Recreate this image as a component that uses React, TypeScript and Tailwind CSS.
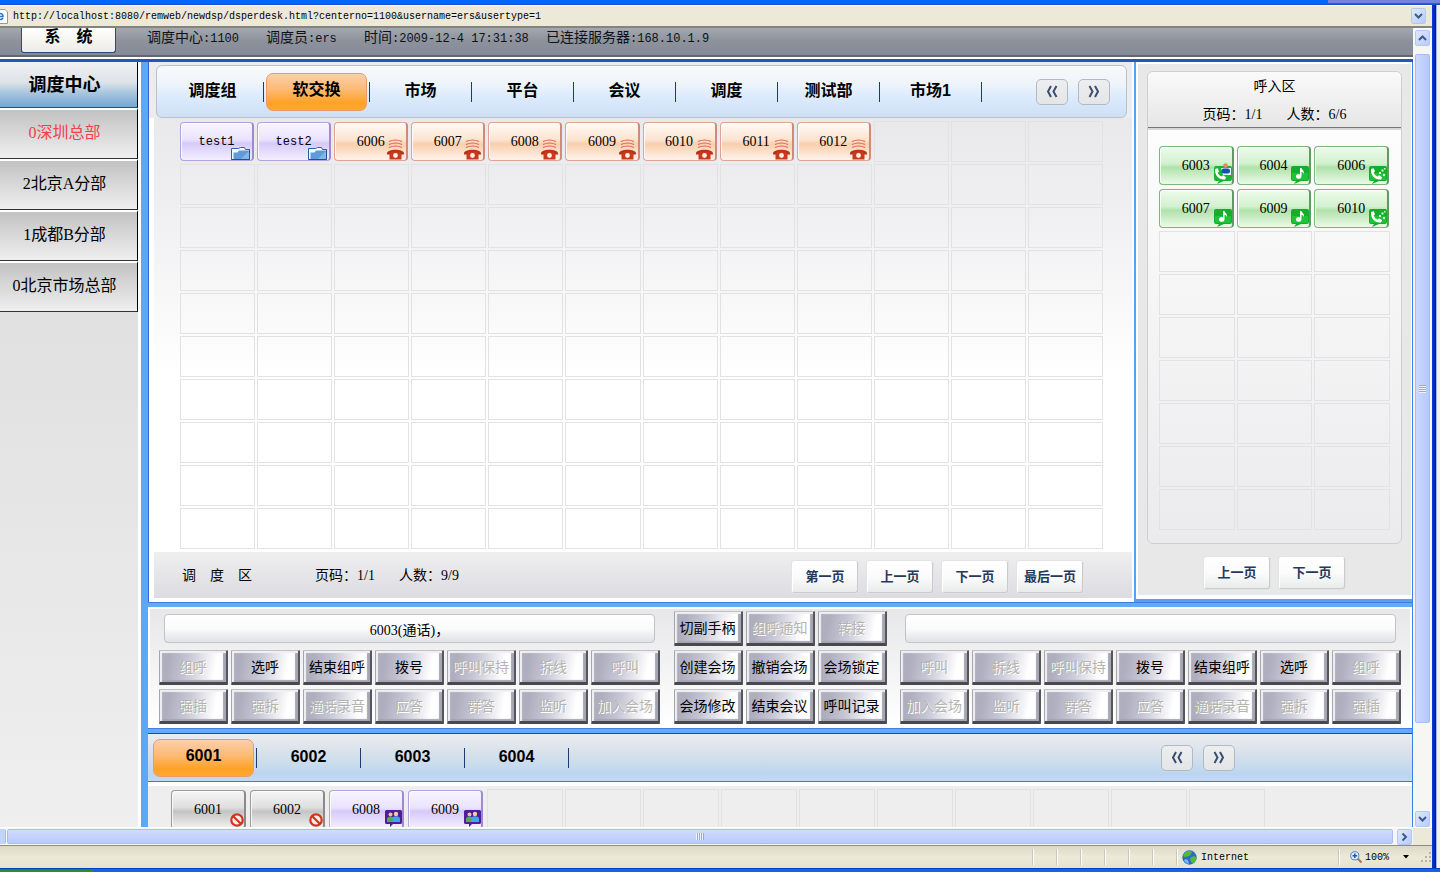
import type { ReactNode } from 'react';
import clsx from 'clsx';

type Tone = 'violet' | 'orange' | 'green' | 'gray';
type IconName = 'folder' | 'phone' | 'note' | 'call' | 'callUser' | 'ban' | 'group';

type Station = { label: string; tone: Tone; icon: IconName };

const centers = ['0深圳总部', '2北京A分部', '1成都B分部', '0北京市场总部'];

const groupTabs = ['调度组', '软交换', '市场', '平台', '会议', '调度', '测试部', '市场1'];

const stations: Station[] = [
  { label: 'test1', tone: 'violet', icon: 'folder' },
  { label: 'test2', tone: 'violet', icon: 'folder' },
  ...['6006', '6007', '6008', '6009', '6010', '6011', '6012'].map(
    (label): Station => ({ label, tone: 'orange', icon: 'phone' })
  )
];

const incoming: Station[] = [
  { label: '6003', tone: 'green', icon: 'callUser' },
  { label: '6004', tone: 'green', icon: 'note' },
  { label: '6006', tone: 'green', icon: 'call' },
  { label: '6007', tone: 'green', icon: 'note' },
  { label: '6009', tone: 'green', icon: 'note' },
  { label: '6010', tone: 'green', icon: 'call' }
];

const members: Station[] = [
  { label: '6001', tone: 'gray', icon: 'ban' },
  { label: '6002', tone: 'gray', icon: 'ban' },
  { label: '6008', tone: 'violet', icon: 'group' },
  { label: '6009', tone: 'violet', icon: 'group' }
];

const enabledActions = ['选呼', '结束组呼', '拨号', '切副手柄', '创建会场', '撤销会场', '会场锁定', '会场修改', '结束会议', '呼叫记录'];

const leftActions = ['组呼', '选呼', '结束组呼', '拨号', '呼叫保持', '拆线', '呼叫', '强插', '强拆', '通话录音', '应答', '群答', '监听', '加入会场'];
const centerActions = ['切副手柄', '组呼通知', '转接', '创建会场', '撤销会场', '会场锁定', '会场修改', '结束会议', '呼叫记录'];
const rightActions = ['呼叫', '拆线', '呼叫保持', '拨号', '结束组呼', '选呼', '组呼', '加入会场', '监听', '群答', '应答', '通话录音', '强拆', '强插'];

const tones: Record<Tone, string> = {
  violet: 'border-[#b3a3dc] border-r-[#9d8ad0] bg-[linear-gradient(#f8f5ff_0%,#eae3ff_45%,#d6cafa_55%,#f3efff_100%)]',
  orange: 'border-[#dfa594] border-r-[#cf8a78] bg-[linear-gradient(#fffaf6_0%,#fde4d0_45%,#f8cfae_57%,#fff3ea_100%)]',
  green: 'border-[#7fb480] border-r-[#5f9a62] bg-[linear-gradient(#eefbec_0%,#d2f1cd_45%,#b0e2aa_55%,#ebfae8_100%)]',
  gray: 'border-[#9a9a9a] border-r-[#8a8a8a] bg-[linear-gradient(#f6f6f6_0%,#dedede_45%,#c4c4c4_55%,#f0f0f0_100%)]'
};

const mono = 'font-["Liberation_Mono","Noto_Sans_CJK_SC",monospace]';
const serif = 'font-["Liberation_Serif","Noto_Sans_CJK_SC",serif]';

function Bubble({ children }: { children?: ReactNode }) {
  return (
    <svg width="18" height="19" viewBox="0 0 18 19" aria-hidden="true">
      <path d="M2 1h14a2 2 0 0 1 2 2v11a2 2 0 0 1-2 2H10l-7 3 2-3H2a2 2 0 0 1-2-2V3a2 2 0 0 1 2-2z" fill="#17ad2c" />
      <path d="M1 8h16v6a1 1 0 0 1-1 1H2a1 1 0 0 1-1-1z" fill="#1fc337" />
      {children}
    </svg>
  );
}

function Handset() {
  return <path d="M2 4 4.800 3.200l1.200 3.200-1.300 1.200c.6 1.900 1.900 3.200 3.900 3.900l1.500-1.300 3 2-1 2.200C6.500 15.400 1.500 10.500 2 4z" fill="#fff" />;
}

function StationIcon({ name }: { name: IconName }) {
  switch (name) {
    case 'folder':
      return (
        <svg width="19" height="13" viewBox="0 0 19 13" aria-hidden="true">
          <path d="M.5 12.500V1.500h7l2-1h4l1 2h4v10z" fill="#f2f9ff" stroke="#2c62ad" />
          <path d="M2.500 12V5.500h4l1.500-2h10V12z" fill="#5e9bd8" />
          <path d="M10 12l8-8v8z" fill="#83b7e8" />
          <path d="M.5 12.500h18v-10" fill="none" stroke="#1f4f98" />
        </svg>
      );
    case 'phone':
      return (
        <svg width="17" height="21" viewBox="0 0 17 21" aria-hidden="true">
          <g fill="none" stroke="#dd6450" strokeWidth="1.200">
            <path d="M2 2.500q6.500-3 13 0M2 5.500q6.500-3 13 0M2 8.500q6.500-3 13 0" />
          </g>
          <path d="M0 14.500c0-5 17-5 17 0v1h-4.500v-2.200h-8v2.200H0z" fill="#bd2f17" />
          <path d="M4.500 12.500h8l2 3v5h-12v-5z" fill="#c63a1d" />
          <circle cx="8.500" cy="16.500" r="2.400" fill="#fff0e6" />
        </svg>
      );
    case 'note':
      return (
        <Bubble>
          <path d="M9 3h1.500c.3 2 3 2.300 2.500 6-.5-1.300-1.300-1.800-2.500-2v4.500A2.800 2.300 0 1 1 9 9.500z" fill="#fff" />
        </Bubble>
      );
    case 'call':
      return (
        <Bubble>
          <Handset />
          <path d="M10 7h2v2h-2zM12.500 4.500h2v2h-2zM14 9h2v2h-2zM15 3h1.500v1.500H15z" fill="#d9ffdc" />
        </Bubble>
      );
    case 'callUser':
      return (
        <svg width="18" height="21" viewBox="0 0 18 21" aria-hidden="true">
          <path d="M2 3h14a2 2 0 0 1 2 2v11a2 2 0 0 1-2 2h-6l-7 3 2-3H2a2 2 0 0 1-2-2V5a2 2 0 0 1 2-2z" fill="#1ab530" />
          <g transform="translate(-1 2)">
            <Handset />
          </g>
          <path d="M7 5h10v7H9z" fill="#e6f3ff" />
          <circle cx="11.500" cy="2.500" r="2.300" fill="#e98a5a" />
          <rect x="7.500" y="5.500" width="8.500" height="5" rx="2.500" fill="#174fae" />
        </svg>
      );
    case 'ban':
      return (
        <svg width="14" height="14" viewBox="0 0 14 14" aria-hidden="true">
          <circle cx="7" cy="7" r="5.700" fill="#f7ece6" stroke="#d3321c" strokeWidth="2.200" />
          <path d="M3 3l8 8" stroke="#d3321c" strokeWidth="2.200" />
        </svg>
      );
    case 'group':
      return (
        <svg width="17" height="17" viewBox="0 0 17 17" aria-hidden="true">
          <path d="M1.500 0h14A1.500 1.500 0 0 1 17 1.500v11a1.500 1.500 0 0 1-1.500 1.500H8l-3 3v-3H1.500A1.500 1.500 0 0 1 0 12.500v-11A1.500 1.500 0 0 1 1.500 0z" fill="#4f1c9a" />
          <circle cx="5.500" cy="4.500" r="2" fill="#f1c08f" />
          <circle cx="11" cy="4" r="2.200" fill="#f3cda2" />
          <path d="M2 12V9q0-2.500 3.500-2.500T9 9v3z" fill="#4fae53" />
          <path d="M7.500 12V8.500q0-2.300 3.500-2.300t4 2.300V12z" fill="#41a5ea" />
        </svg>
      );
  }
}

function StationButton({ label, tone, icon }: Station) {
  return (
    <button
      type="button"
      className={clsx(
        'relative h-[39px] w-full rounded-[4px] border border-r-2 text-center text-black shadow-[inset_1px_1px_0_#ffffffcc]',
        label.startsWith('t') ? `text-xs ${mono}` : `text-sm ${serif}`,
        tones[tone]
      )}
    >
      {label}
      <span
        className={clsx('absolute', {
          'right-0.5 bottom-0': icon === 'folder' || icon === 'phone',
          'right-0 bottom-0': icon === 'note' || icon === 'call' || icon === 'callUser',
          'right-0 bottom-px': icon === 'ban' || icon === 'group'
        })}
      >
        <span className="block [&>svg]:block">
          <StationIcon name={icon} />
        </span>
      </span>
    </button>
  );
}

function StationGrid({ items, total, className }: { items: Station[]; total: number; className: string }) {
  return (
    <div className={clsx('grid auto-rows-[41px] gap-0.5', className)}>
      {Array.from({ length: total }, (_, i) =>
        items[i] ? (
          <div key={i} className="py-px pr-px">
            <StationButton {...items[i]} />
          </div>
        ) : (
          <div key={i} className="border border-[#e2e2e4]" />
        )
      )}
    </div>
  );
}

function PageButton({ children }: { children: ReactNode }) {
  return (
    <button
      type="button"
      className="h-8 w-[66px] rounded-[3px] border border-[#c9cbcd] border-t-white border-l-white bg-linear-to-b from-white via-[#fbfbfb] to-[#e9ebeb] text-[13px] font-bold whitespace-nowrap text-[#26395a] shadow-[0_0_0_1px_#e3e3e5]"
    >
      {children}
    </button>
  );
}

function NavButtons() {
  return (
    <div className="flex gap-2.5">
      {['上一组', '下一组'].map((name, i) => (
        <button
          key={name}
          type="button"
          aria-label={name}
          className="flex h-[26px] w-8 items-center justify-center rounded-[5px] border border-[#b4b9bf] bg-linear-to-b from-[#eceef0] to-[#e4e5e6]"
        >
          <svg width="12" height="13" viewBox="0 0 12 13" className={i === 1 ? 'rotate-180' : undefined} aria-hidden="true">
            <path d="M5 1 2 6.500 5 12M10.500 1l-3 5.500 3 5.500" fill="none" stroke="#3b4d70" strokeWidth="2" />
          </svg>
        </button>
      ))}
    </div>
  );
}

function TabButton({ label, active, width }: { label: string; active: boolean; width: string }) {
  return (
    <div className={clsx('flex items-center', active ? 'pl-0.5' : width)}>
      <button
        type="button"
        className={clsx(
          'h-[38px] text-base font-bold text-black',
          active
            ? 'mr-0.5 w-[101px] rounded-[7px] border border-[#eb9a6c] bg-[linear-gradient(#fbcfae_0%,#fdb970_45%,#ffa226_80%,#ffa930_100%)] pb-1'
            : 'flex-1 pb-0.5'
        )}
      >
        {label}
      </button>
      <span className="h-5 w-px bg-[#1b3c6e]" />
    </div>
  );
}

function ActionButton({ label }: { label: string }) {
  const disabled = !enabledActions.includes(label);
  return (
    <button
      type="button"
      disabled={disabled}
      className={clsx(
        'h-[35px] w-[69px] rounded-[1px] border-t border-r-2 border-b-3 border-l border-t-[#c2c2c6] border-r-[#55555c] border-b-[#48484e] border-l-[#a5a5ab] bg-[linear-gradient(100deg,#aeaebf_15%,#c6c6d5_42%,#ffffff_82%)] text-sm whitespace-nowrap shadow-[inset_2px_2px_1px_#f0f0f4,inset_-3px_-2px_1px_#a6a6b2]',
        disabled ? 'text-[#b5b4ae] [text-shadow:1px_1px_0_#ffffff]' : 'text-black'
      )}
    >
      <span className="-mx-2">{label}</span>
    </button>
  );
}

function CallPanel({ name, value, actions }: { name: string; value: string; actions: string[] }) {
  return (
    <div>
      <div className="px-[5px] pt-[3px]">
        <input
          readOnly
          aria-label={name}
          value={value}
          className={clsx(
            'block h-[29px] w-full rounded-[4px] border border-[#c0c4c8] bg-linear-to-b from-white via-[#fbfbfc] to-[#dfe2e6] text-center text-sm text-black outline-none',
            serif
          )}
        />
      </div>
      <div className="mt-[7px] grid grid-cols-7 gap-x-[3px] gap-y-1">
        {actions.map((label) => (
          <ActionButton key={label} label={label} />
        ))}
      </div>
    </div>
  );
}

function PageInfo({ people }: { people: string }) {
  return (
    <span className={clsx('text-sm whitespace-pre', serif)}>
      页码：<span className="inline-block w-[42px] text-left">1/1</span>人数：{people}
    </span>
  );
}

function ScrollButton({ dir }: { dir: 'up' | 'down' | 'right' }) {
  return (
    <button
      type="button"
      aria-label={dir}
      className="flex h-4 w-[15px] shrink-0 items-center justify-center rounded-[2px] border border-[#b5c8f5] bg-linear-to-br from-[#dfe9ff] to-[#b7cbfb]"
    >
      <svg
        width="9"
        height="6"
        viewBox="0 0 9 6"
        className={clsx('shrink-0', dir === 'up' && 'rotate-180', dir === 'right' && '-rotate-90')}
        aria-hidden="true"
      >
        <path d="M1 1l3.500 3.500L8 1" fill="none" stroke="#3f5a85" strokeWidth="2" />
      </svg>
    </button>
  );
}

function Toolbar() {
  return (
    <div className="flex h-[29px] items-start overflow-hidden border-b-2 border-[#62666d] bg-linear-to-b from-[#a4a8b0] via-[#8c919b] to-[#858b98] pl-[21px] text-sm leading-[18px] whitespace-nowrap text-[#0d1118]">
      <button type="button" className="flex h-[25px] w-[95px] justify-center gap-4 rounded-b-[3px] border border-t-0 border-[#2c4a7c] bg-linear-to-b from-white to-[#ecebe6] text-base leading-[18px] font-bold text-black">
        <span>系</span>
        <span>统</span>
      </button>
      <p className="ml-[31px] w-[119px]">调度中心<span className={`text-xs ${mono}`}>:1100</span></p>
      <p className="w-[98px]">调度员<span className={`text-xs ${mono}`}>:ers</span></p>
      <p className="w-[182px]">时间<span className={`text-xs ${mono}`}>:2009-12-4 17:31:38</span></p>
      <p>已连接服务器<span className={`text-xs ${mono}`}>:168.10.1.9</span></p>
    </div>
  );
}

function Sidebar() {
  return (
    <aside className="w-[138px] shrink-0 bg-linear-to-b from-[#d9d9d9] to-[#efefef]">
      <h1 className="flex h-[46px] items-center justify-center border-r border-b border-r-black border-b-[#24507e] bg-[linear-gradient(#f1f2f3_0%,#dde3e8_45%,#a5c4de_70%,#74a7d4_100%)] pr-2 text-lg font-bold">
        调度中心
      </h1>
      {centers.map((name, i) => (
        <button
          key={name}
          type="button"
          className={clsx(
            'block h-[51px] w-full border-t-2 border-r border-b border-t-white border-r-black border-b-[#333] bg-[linear-gradient(#c2c2c2_0%,#d2d2d2_35%,#efefef_100%)] pr-2 pb-0.5 text-base',
            serif,
            i === 0 ? 'text-[#f0414f]' : 'text-black'
          )}
        >
          {name}
        </button>
      ))}
    </aside>
  );
}

function DispatchArea() {
  return (
    <section className="flex min-w-0 flex-1 flex-col border-r-2 border-b-4 border-white bg-white">
      <div className="bg-[#ececee] pt-[3px] pr-[5px] pl-[7px]">
        <div className="flex h-[53px] items-center justify-between rounded-[6px] border border-[#b9c1ca] bg-[linear-gradient(#f8f9fa_0%,#eef4fa_35%,#dcebfd_60%,#cfdff5_100%)] pr-4 pl-[5px]">
          <div className="flex">
            {groupTabs.map((tab) => (
              <TabButton key={tab} label={tab} active={tab === '软交换'} width="w-[102px]" />
            ))}
          </div>
          <NavButtons />
        </div>
      </div>
      <div className="ml-[5px] bg-[linear-gradient(#e9e9eb_0%,#efeff1_20%,#ffffff_60%)] pt-[3px] pr-[29px] pb-[3px] pl-[26px]">
        <StationGrid items={stations} total={120} className="grid-cols-12" />
      </div>
      <div className="ml-[5px] flex h-[46px] items-center bg-linear-to-b from-[#efeff0] to-[#dcdbe0] pr-[49px] pl-[28px]">
        <h2 className="flex gap-3.5 text-sm">
          <span>调</span>
          <span>度</span>
          <span>区</span>
        </h2>
        <div className="ml-[63px]">
          <PageInfo people="9/9" />
        </div>
        <div className="mt-1 ml-auto flex gap-[9px]">
          {['第一页', '上一页', '下一页', '最后一页'].map((label) => (
            <PageButton key={label}>{label}</PageButton>
          ))}
        </div>
      </div>
    </section>
  );
}

function IncomingArea() {
  return (
    <section className="flex w-[278px] shrink-0 flex-col border-b-3 border-l-2 border-[#5a9ff2] bg-white pt-0.5 pr-px pb-1 pl-0.5">
      <div className="flex flex-1 flex-col items-center bg-[#e8e8e9] px-[9px] pt-[7px]">
        <div className="w-full rounded-[6px] border border-[#cfcfd2] bg-linear-to-b from-white to-[#ebebed]">
          <header className="flex h-[56px] flex-col items-center rounded-t-[6px] border-b border-[#77747a] bg-linear-to-b from-[#fafafa] to-[#e6e6e7]">
            <h2 className="h-[29px] text-sm leading-[28px]">呼入区</h2>
            <div className="h-px w-40 bg-linear-to-r from-transparent via-[#d2d2d4] to-transparent" />
            <div className="text-center leading-[28px]"><PageInfo people="6/6" /></div>
          </header>
          <div className="border-t-2 border-[#d8d8da] px-[11px] pt-[15px] pb-[13px]">
            <StationGrid items={incoming} total={27} className="grid-cols-3" />
          </div>
        </div>
        <div className="mt-[13px] flex gap-[9px]">
          <PageButton>上一页</PageButton>
          <PageButton>下一页</PageButton>
        </div>
      </div>
    </section>
  );
}

function ControlArea() {
  return (
    <section className="flex h-[121px] items-start justify-between border-2 border-white bg-linear-to-b from-[#e7e7e9] to-white pt-0.5 pr-[9px] pl-[9px]">
      <CallPanel name="左手柄状态" value="6003(通话)，" actions={leftActions} />
      <div className="grid grid-cols-3 gap-x-[3px] gap-y-1">
        {centerActions.map((label) => (
          <ActionButton key={label} label={label} />
        ))}
      </div>
      <CallPanel name="右手柄状态" value="" actions={rightActions} />
    </section>
  );
}

function MemberArea() {
  return (
    <section className="flex min-h-0 flex-1 flex-col border-t border-[#1d4c9a] bg-white">
      <div className="flex h-12 shrink-0 items-center justify-between border-b border-[#3d7ccc] bg-[linear-gradient(#ebecee_0%,#d6e0ea_45%,#bcd6f0_85%,#c5d8f0_100%)] pr-[177px] pl-[3px] font-['Liberation_Sans',sans-serif]">
        <div className="flex">
          {['6001', '6002', '6003', '6004'].map((tab) => (
            <TabButton key={tab} label={tab} active={tab === '6001'} width="w-[104px]" />
          ))}
        </div>
        <NavButtons />
      </div>
      <div className="mt-1 flex min-h-0 flex-1 overflow-hidden bg-[#eeeeef] pt-[3px] pl-[23px]">
        {members.map((m) => (
          <div key={m.label} className="w-[79px] shrink-0 pt-px pr-1">
            <StationButton {...m} />
          </div>
        ))}
        {Array.from({ length: 10 }, (_, i) => (
          <div key={i} className="w-[78px] shrink-0 pr-0.5">
            <div className="h-full border border-b-0 border-[#e1e1e3]" />
          </div>
        ))}
      </div>
    </section>
  );
}

function StatusBar() {
  return (
    <footer className={clsx('flex h-[23px] items-center border-t border-[#8f8d82] bg-linear-to-b from-[#dcd9c8] via-[#ece9d8] to-[#e6e3d0] text-[10px]', mono)}>
      <div className="ml-auto flex">
        {Array.from({ length: 6 }, (_, i) => (
          <span key={i} className="h-4 w-6 border-l border-[#c9c6b4] shadow-[inset_1px_0_0_#ffffff]" />
        ))}
      </div>
      <div className="flex h-4 w-[162px] items-center gap-1 border-l border-[#c9c6b4] pl-[5px] shadow-[inset_1px_0_0_#ffffff]">
        <svg width="15" height="15" viewBox="0 0 15 15" aria-hidden="true">
          <circle cx="7.500" cy="7.500" r="7.200" fill="#2c6dc2" />
          <path d="M3 2.500q3-2.500 6-1.500l1 2-3 3-4 1-2-1zM8 8l4-2 2.500 1.500q0 4-3.500 6L9 12z" fill="#56b93f" />
          <path d="M3 9l3 1 1 4q-3-.5-5-3z" fill="#74b7ee" />
        </svg>
        <span>Internet</span>
      </div>
      <div className="flex h-4 w-[94px] items-center gap-[3px] border-l border-[#c9c6b4] pl-[11px] shadow-[inset_1px_0_0_#ffffff]">
        <svg width="12" height="12" viewBox="0 0 12 12" aria-hidden="true">
          <path d="M7.500 7.500l4 4" stroke="#a77848" strokeWidth="2" />
          <circle cx="4.800" cy="4.800" r="4.100" fill="#dcecff" stroke="#4b83c6" />
          <path d="M4.800 2.500v4.600M2.500 4.800h4.600" stroke="#1f5cb0" strokeWidth="1.600" />
        </svg>
        <span>100%</span>
        <svg width="6" height="4" viewBox="0 0 6 4" className="ml-[11px]" aria-hidden="true">
          <path d="M0 0h6L3 3.500z" fill="#000" />
        </svg>
        <svg width="12" height="12" viewBox="0 0 12 12" className="ml-auto" aria-hidden="true">
          <path d="M9 1h2v2H9zM9 5h2v2H9zM5 5h2v2H5zM9 9h2v2H9zM5 9h2v2H5zM1 9h2v2H1z" fill="#b8b4a0" />
        </svg>
      </div>
    </footer>
  );
}

export default function App() {
  return (
    <div className="flex h-screen flex-col overflow-hidden bg-[#ece9d8] font-['Liberation_Sans','Noto_Sans_CJK_SC',sans-serif] text-black">
      <div className="flex h-[5px] shrink-0 border-b border-[#1a50c8] bg-[#0268fb]">
        <span className="ml-auto h-[3px] w-28 bg-[#7583dc]" />
      </div>
      <div className="flex min-h-0 flex-1">
        <div className="flex min-w-0 flex-1 flex-col">
          <div className="flex h-[23px] shrink-0 items-center border-t border-b-2 border-t-white border-b-[#85847c] pr-[6px]">
            <svg width="8" height="15" viewBox="0 0 8 15" aria-hidden="true">
              <path d="M0 .5h5l2.500 2.500v11.500H0" fill="#fff" stroke="#8d9ab0" />
              <path d="M0 4.500q3 0 3 3H0M0 10.500q2 0 3-1.500" fill="none" stroke="#2f75c8" strokeWidth="1.500" />
            </svg>
            <input
              readOnly
              aria-label="地址"
              value="http://localhost:8080/remweb/newdsp/dsperdesk.html?centerno=1100&username=ers&usertype=1"
              className={clsx('ml-[5px] min-w-0 flex-1 bg-transparent text-[10px] outline-none', mono)}
            />
            <ScrollButton dir="down" />
          </div>
          <div className="flex min-h-0 flex-1">
            <main className="flex min-w-0 flex-1 flex-col bg-white">
              <Toolbar />
              <div className="mt-0.5 flex min-h-0 flex-1 border-t-3 border-[#2458b8]">
                <Sidebar />
                <div className="ml-[3px] flex min-w-0 flex-1 flex-col border-r border-l-[7px] border-r-[#3a80e8] border-l-[#5aa8f8]">
                  <div className="flex border-l border-[#3a62d8] bg-white">
                    <DispatchArea />
                    <IncomingArea />
                  </div>
                  <div className="h-[5px] shrink-0 border-t border-[#3b7fe0] bg-[#64aaf6]" />
                  <ControlArea />
                  <div className="h-[5px] shrink-0 border-t border-[#3b7fe0] bg-[#64aaf6]" />
                  <MemberArea />
                </div>
              </div>
            </main>
            <div className="flex w-[19px] shrink-0 flex-col items-center bg-[#f6f6f2] pt-0.5">
              <ScrollButton dir="up" />
              <div className="mt-2 flex min-h-0 w-[15px] flex-1 flex-col items-center justify-center rounded-[2px] border border-[#a9bdf0] bg-linear-to-r from-[#cbd9ff] to-[#b5c8fa]">
                <span className="h-2 w-[7px] bg-[repeating-linear-gradient(#8fa8e6_0_1px,#eef4ff_1px_2px)]" />
              </div>
              <div className="h-[88px] w-[15px] shrink-0" />
              <ScrollButton dir="down" />
            </div>
          </div>
          <div className="flex h-[18px] shrink-0 items-center border-t border-white bg-[#f6f6f2]">
            <div className="h-[15px] w-1.5 rounded-r-[2px] border-r border-[#a9bdf0] bg-[#c3d3fd]" />
            <div className="ml-px flex h-[15px] flex-1 items-center justify-center rounded-[2px] border border-[#a9bdf0] bg-linear-to-b from-[#cfdcff] to-[#b9cafb]">
              <span className="h-[7px] w-2 bg-[repeating-linear-gradient(90deg,#eef4ff_0_1px,#8fa8e6_1px_2px)]" />
            </div>
            <div className="ml-1 flex">
              <ScrollButton dir="right" />
            </div>
            <div className="ml-px h-full w-[19px] bg-[#ece9d8]" />
          </div>
          <StatusBar />
        </div>
        <div className="w-1 shrink-0 bg-linear-to-r from-[#0a3bd8] to-[#001c9c]" />
        <div className="w-1 shrink-0 border-l border-[#9db4e8] bg-[#f4f2ea]" />
      </div>
      <div className="flex h-1 shrink-0 items-end border-t border-[#0b3fc0] bg-[#1c62e0]">
        <span className="h-0.5 w-[93px] bg-[#2f8a3a]" />
      </div>
    </div>
  );
}
